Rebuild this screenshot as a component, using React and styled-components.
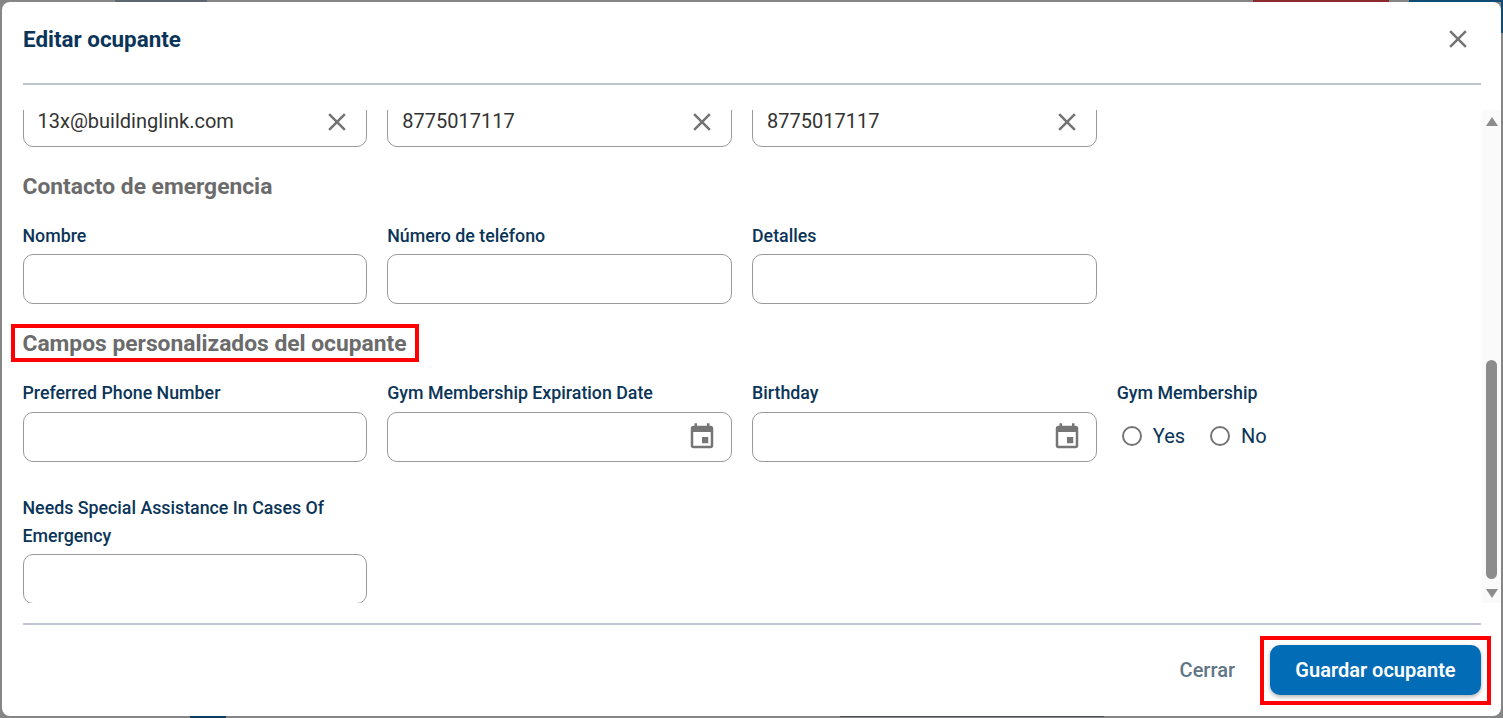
import React from "react";
import styled, { createGlobalStyle } from "styled-components";

const GlobalStyle = createGlobalStyle`
  html, body {
    margin: 0;
    padding: 0;
    height: 100%;
    overflow: hidden;
    background: #868686;
    font-family: Roboto, "Liberation Sans", sans-serif;
  }
  * {
    box-sizing: border-box;
  }
`;

const Page = styled.div`
  position: relative;
  width: 1503px;
  height: 718px;
  padding: 2px;
  overflow: hidden;
  background: #868686;
`;

// bits of the page behind the dialog that peek out at the edges
const BehindStrip = styled.div`
  position: absolute;
  left: ${(p) => p.$left}px;
  top: ${(p) => p.$top}px;
  width: ${(p) => p.$width}px;
  height: ${(p) => p.$height}px;
  background: ${(p) => p.$color};
`;

const Modal = styled.div`
  position: relative;
  display: flex;
  flex-direction: column;
  width: 1499px;
  height: 714px;
  background: #fff;
  border-radius: 8px;
  overflow: hidden;
`;

const Header = styled.div`
  display: flex;
  align-items: center;
  justify-content: space-between;
  height: 81px;
  padding: 0 28px 8px 21px;
`;

const Title = styled.h1`
  margin: 0;
  font-size: 22.4px;
  line-height: 28px;
  font-weight: 700;
  color: #0b3558;
`;

const Divider = styled.div`
  flex: none;
  height: 2px;
  margin: ${(p) => (p.$footer ? "20px" : "0")} 20px 0 21px;
  background: #c0c5d2;
`;

const Body = styled.div`
  display: flex;
  height: 493px;
  margin-top: 25px;
`;

const ScrollArea = styled.div`
  flex: 1;
  min-width: 0;
  overflow: hidden;
  padding-left: 20.5px;
`;

const ScrollInner = styled.div`
  margin-top: -13px;
`;

const Scrollbar = styled.div`
  flex: none;
  display: flex;
  flex-direction: column;
  align-items: center;
  width: 19px;
  background: #fafafa;
`;

const ScrollThumb = styled.div`
  width: 11px;
  height: 219px;
  margin-top: 234px;
  border-radius: 6px;
  background: #8c8c8c;
`;

const ArrowUp = styled.div`
  width: 0;
  height: 0;
  margin-top: 7px;
  border-left: 6px solid transparent;
  border-right: 6px solid transparent;
  border-bottom: 9px solid #8c8c8c;
`;

const ArrowDown = styled.div`
  width: 0;
  height: 0;
  margin-top: 10px;
  border-left: 6px solid transparent;
  border-right: 6px solid transparent;
  border-top: 9px solid #8c8c8c;
`;

const FieldGrid = styled.div`
  display: grid;
  grid-template-columns: repeat(4, 344.75px);
  column-gap: 20px;
  row-gap: 32px;
`;

const FieldColumn = styled.div`
  display: flex;
  flex-direction: column;
  justify-content: flex-end;
`;

const Label = styled.label`
  display: block;
  margin-bottom: 4px;
  font-size: 17.8px;
  line-height: 28px;
  font-weight: 500;
  color: #0b3558;
`;

// first row of the custom fields sits a pixel further from its labels
const CustomFieldGrid = styled(FieldGrid)`
  & > :nth-child(-n + 4) ${Label} {
    margin-bottom: 5px;
  }
`;

const InputBox = styled.div`
  display: flex;
  align-items: center;
  justify-content: space-between;
  height: 50px;
  padding: 0 14px;
  border: 1px solid #9a9a9a;
  border-radius: 10px;
  background: #fff;
`;

const InputText = styled.span`
  margin-top: -2px;
  font-size: 20px;
  color: #333;
`;

const SectionTitle = styled.h2`
  height: 30px;
  margin: ${(p) => (p.$first ? "24px 0 21px" : "0")};
  font-size: 22.8px;
  line-height: 32px;
  font-weight: 700;
  color: #6b6b6b;
`;

// red highlight drawn round a part of the screen in the reference
const MarkedTitle = styled.div`
  width: fit-content;
  margin: 20px 0 17px -12px;
  padding: 0 8px;
  border: 4px solid #f00;
`;

const RadioRow = styled.div`
  display: flex;
  align-items: center;
  gap: 25px;
  height: 50px;
  padding: 0 0 2px 5px;
`;

const RadioOption = styled.div`
  display: flex;
  align-items: center;
  gap: 11px;
  font-size: 20px;
  color: #0b3558;
`;

const RadioCircle = styled.span`
  width: 20px;
  height: 20px;
  border: 2px solid #757575;
  border-radius: 50%;
`;

const Footer = styled.div`
  display: flex;
  align-items: flex-start;
  justify-content: flex-end;
  gap: 25px;
  padding: 11px 10px 0 0;
`;

const CloseLink = styled.button`
  height: 68px;
  padding: 0;
  border: none;
  background: none;
  font-family: inherit;
  font-size: 20px;
  font-weight: 500;
  color: #607585;
  cursor: pointer;
`;

const MarkedButton = styled.div`
  padding: 5px 6px 6px;
  border: 4px solid #f00;
`;

const SaveButton = styled.button`
  display: block;
  width: 211px;
  height: 50px;
  border: none;
  border-radius: 10px;
  background: #036cb7;
  box-shadow: 0 2px 4px rgba(0, 0, 0, 0.3);
  font-family: inherit;
  font-size: 20px;
  font-weight: 600;
  color: #fff;
  cursor: pointer;
`;

const IconSvg = styled.svg`
  flex: none;
  display: block;
  fill: #757575;
`;

const CloseIcon = () => (
  <IconSvg width="30" height="30" viewBox="0 0 24 24">
    <path d="M19 6.41 17.59 5 12 10.59 6.41 5 5 6.41 10.59 12 5 17.59 6.41 19 12 13.41 17.59 19 19 17.59 13.41 12z" />
  </IconSvg>
);

const CalendarIcon = () => (
  <IconSvg width="30" height="30" viewBox="0 0 24 24">
    <path d="M17 12h-5v5h5v-5zM16 1v2H8V1H6v2H5c-1.11 0-1.99.9-1.99 2L3 19c0 1.1.89 2 2 2h14c1.1 0 2-.9 2-2V5c0-1.1-.9-2-2-2h-1V1h-2zm3 18H5V8h14v11z" />
  </IconSvg>
);

const Field = ({ label, value, icon }) => (
  <FieldColumn>
    {label && <Label>{label}</Label>}
    <InputBox>
      <InputText>{value}</InputText>
      {icon}
    </InputBox>
  </FieldColumn>
);

const behind = [
  { left: 1253, top: 0, width: 136, height: 2, color: "#8b2a2c" },
  { left: 1409, top: 0, width: 94, height: 2, color: "#0d4a74" },
  { left: 1501, top: 0, width: 2, height: 33, color: "#0d4a74" },
  { left: 115, top: 0, width: 92, height: 2, color: "#5c6670" },
  { left: 190, top: 716, width: 36, height: 2, color: "#0d3f63" },
  { left: 840, top: 716, width: 264, height: 1, color: "#4a5055" },
];

export default function App() {
  return (
    <Page>
      <GlobalStyle />
      {behind.map((s) => (
        <BehindStrip key={s.left} $left={s.left} $top={s.top} $width={s.width} $height={s.height} $color={s.color} />
      ))}
      <Modal>
        <Header>
          <Title>Editar ocupante</Title>
          <CloseIcon />
        </Header>
        <Divider />
        <Body>
          <ScrollArea>
            <ScrollInner>
              <FieldGrid>
                <Field value="13x@buildinglink.com" icon={<CloseIcon />} />
                <Field value="8775017117" icon={<CloseIcon />} />
                <Field value="8775017117" icon={<CloseIcon />} />
              </FieldGrid>

              <SectionTitle $first>Contacto de emergencia</SectionTitle>
              <FieldGrid>
                <Field label="Nombre" />
                <Field label="Número de teléfono" />
                <Field label="Detalles" />
              </FieldGrid>

              <MarkedTitle>
                <SectionTitle>Campos personalizados del ocupante</SectionTitle>
              </MarkedTitle>
              <CustomFieldGrid>
                <Field label="Preferred Phone Number" />
                <Field label="Gym Membership Expiration Date" icon={<CalendarIcon />} />
                <Field label="Birthday" icon={<CalendarIcon />} />
                <FieldColumn>
                  <Label>Gym Membership</Label>
                  <RadioRow>
                    <RadioOption>
                      <RadioCircle />
                      Yes
                    </RadioOption>
                    <RadioOption>
                      <RadioCircle />
                      No
                    </RadioOption>
                  </RadioRow>
                </FieldColumn>
                <Field label="Needs Special Assistance In Cases Of Emergency" />
              </CustomFieldGrid>
            </ScrollInner>
          </ScrollArea>
          <Scrollbar>
            <ArrowUp />
            <ScrollThumb />
            <ArrowDown />
          </Scrollbar>
        </Body>
        <Divider $footer />
        <Footer>
          <CloseLink>Cerrar</CloseLink>
          <MarkedButton>
            <SaveButton>Guardar ocupante</SaveButton>
          </MarkedButton>
        </Footer>
      </Modal>
    </Page>
  );
}
